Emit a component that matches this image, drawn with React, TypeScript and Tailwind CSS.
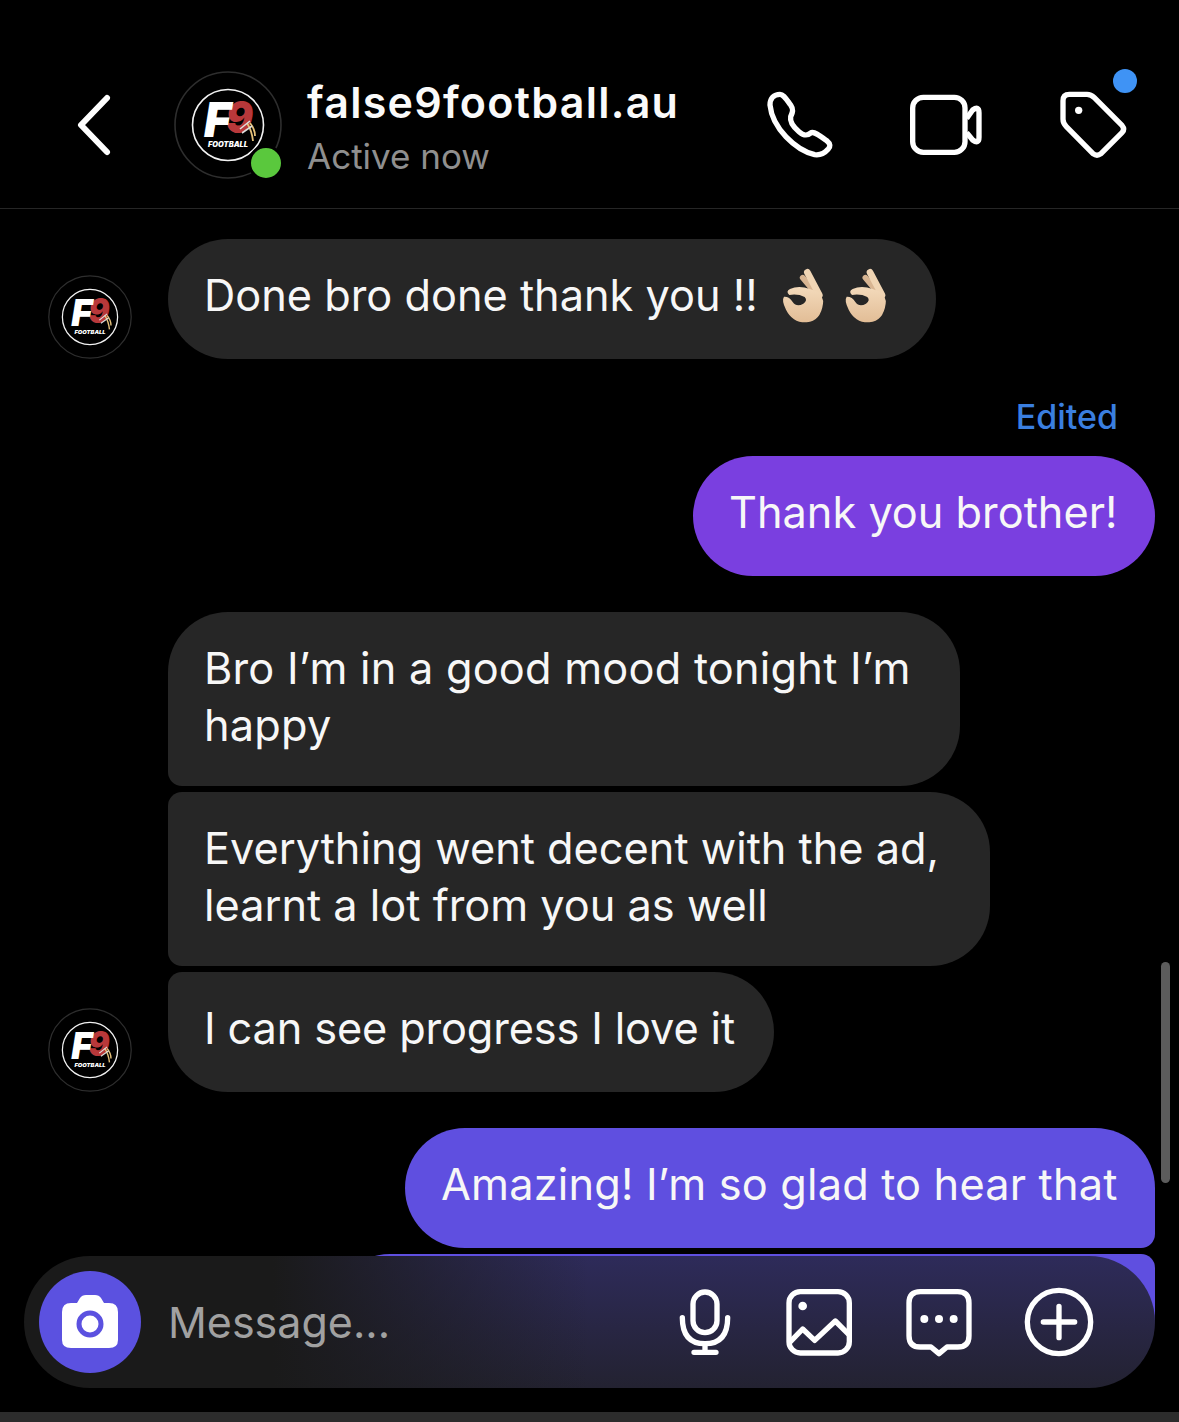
const sans = "font-['Inter','Liberation_Sans',sans-serif]";

const Logo = ({ className }: { className: string }) => (
  <svg viewBox="0 0 108 108" className={className}>
    <circle cx="54" cy="54" r="53" fill="#000" stroke="#2e2e2e" strokeWidth="1.6" />
    <circle cx="54" cy="54" r="35.5" fill="#000" stroke="#f2f2f2" strokeWidth="1.6" />
    <text x="52" y="62" fill="#b8383a" fontSize="44" fontWeight="900" fontStyle="italic" fontFamily="Inter, sans-serif" textLength="27" lengthAdjust="spacingAndGlyphs">9</text>
    <text x="30" y="66" fill="#fff" fontSize="48" fontWeight="900" fontStyle="italic" fontFamily="Inter, sans-serif" textLength="27" lengthAdjust="spacingAndGlyphs">F</text>
    <path d="M73 52 Q78 60 79 70 M76 52 Q81 58 81 65" stroke="#e6c27a" strokeWidth="1.8" fill="none" />
    <path d="M66 58 L76 50 M68 62 L78 55" stroke="#ddd" strokeWidth="1.6" fill="none" />
    <text x="34" y="76" fill="#fff" fontSize="7" fontWeight="900" fontStyle="italic" fontFamily="Inter, sans-serif" textLength="40" lengthAdjust="spacingAndGlyphs">FOOTBALL</text>
  </svg>
);

const Hand = ({ dx }: { dx: number }) => (
  <g transform={`translate(${dx} 0)`}>
    <path d="M128 82 L168 130" stroke="#d8b592" strokeWidth="17" strokeLinecap="round" fill="none" />
    <path d="M142 66 L178 134" stroke="#f0d5b4" strokeWidth="20" strokeLinecap="round" fill="none" />
    <path
      d="M72 139 Q64 150 78 178 Q98 218 140 216 Q182 212 189 160 Q192 140 172 124 L150 116 Q116 104 90 116 Q76 124 88 134 Q114 130 134 140 Q144 150 130 160 Q110 172 98 155 Q88 138 72 139Z"
      fill="url(#skin)"
    />
  </g>
);

const OkHands = () => (
  <svg viewBox="60 50 330 180" className="ml-[22px] h-[60px] w-[110px] shrink-0">
    <defs>
      <linearGradient id="skin" x1="0" y1="0" x2="0" y2="1">
        <stop offset="0" stopColor="#f3dabb" />
        <stop offset="1" stopColor="#e2bd96" />
      </linearGradient>
    </defs>
    <Hand dx={0} />
    <Hand dx={188} />
  </svg>
);

const Bubble = ({ className, children }: { className: string; children: React.ReactNode }) => (
  <div className={`flex min-h-[120px] items-start pb-[32px] pl-[36px] pr-[37px] pt-[28px] text-[43.3px] leading-[57px] text-[#f7f7f7] ${className}`}>
    {children}
  </div>
);

const Header = () => (
  <div className="flex h-[209px] shrink-0 items-center border-b border-[#262626] pl-[74px] pr-[50px] pt-[41px]">
    <svg viewBox="0 0 40 66" className="h-[66px] w-[40px] shrink-0">
      <path d="M33 6 L7 33 L33 60" stroke="#fff" strokeWidth="6" strokeLinecap="round" strokeLinejoin="round" fill="none" />
    </svg>
    <div className="relative ml-[60px] h-[108px] w-[108px] shrink-0">
      <Logo className="h-[108px] w-[108px]" />
      <span className="absolute left-[74px] top-[74px] h-[36px] w-[36px] rounded-full border-[3px] border-black bg-[#5ac83d]" />
    </div>
    <div className="ml-[25px] flex flex-col pt-[7px]">
      <span className="text-[43px] font-semibold leading-[50px] tracking-[1.25px] text-[#fafafa]">false9football.au</span>
      <span className="mt-[6px] text-[35px] leading-[46px] text-[#8f8f8f]">Active now</span>
    </div>
    <div className="ml-auto flex items-center gap-[75px]">
      <svg viewBox="67 117 216 216" className="h-[72px] w-[72px]">
        <path
          d="M88 165 C88 145 100 133 118 133 C128 133 135 145 150 165 C160 180 155 188 150 200 C147 215 155 228 175 245 C190 258 200 258 212 248 C222 245 235 255 258 272 C270 282 270 290 262 298 C250 312 238 316 222 314 C165 300 95 235 88 165Z"
          stroke="#fff"
          strokeWidth="16"
          strokeLinejoin="round"
          fill="none"
        />
      </svg>
      <svg viewBox="510 117 216 216" className="h-[72px] w-[72px]">
        <rect x="518" y="142" width="157" height="165" rx="32" stroke="#fff" strokeWidth="16" fill="none" />
        <path d="M680 205 L698 180 Q717 166 717 188 V262 Q717 284 698 270 L680 248" stroke="#fff" strokeWidth="16" strokeLinejoin="round" fill="none" />
      </svg>
      <div className="relative h-[72px] w-[72px]">
        <svg viewBox="950 117 216 216" className="h-[72px] w-[72px]">
          <path
            d="M968 152 Q968 133 987 133 H1040 Q1052 133 1062 143 L1145 226 Q1155 238 1145 248 L1082 311 Q1070 320 1058 311 L978 230 Q968 220 968 208Z"
            stroke="#fff"
            strokeWidth="16"
            strokeLinejoin="round"
            fill="none"
          />
          <circle cx="1015" cy="181" r="11" fill="#fff" />
        </svg>
        <span className="absolute left-[56px] top-[-20px] h-[24px] w-[24px] rounded-full bg-[#3f93f5]" />
      </div>
    </div>
  </div>
);

const Composer = () => (
  <div className="absolute bottom-[24px] left-[24px] flex h-[132px] w-[1131px] items-center rounded-[66px] bg-[linear-gradient(90deg,#1a1a1a_22%,rgba(26,26,26,0)_50%),linear-gradient(180deg,#2e2b5a_0%,#232231_100%)] pl-[15px] pr-[60px]">
    <div className="flex h-[102px] w-[102px] shrink-0 items-center justify-center rounded-full bg-[#5b51e0]">
      <svg viewBox="0 0 56 54" className="h-[54px] w-[56px]">
        <path d="M9 8 H15 L18 3 Q20 0 24 0 H33 Q37 0 39 3 L42 8 H47 Q56 8 56 17 V45 Q56 53 47 53 H9 Q0 53 0 45 V17 Q0 8 9 8Z" fill="#fff" />
        <circle cx="28" cy="29" r="11" stroke="#5b51e0" strokeWidth="5" fill="none" />
      </svg>
    </div>
    <span className="ml-[27px] text-[43px] leading-[50px] text-[#a1a1a1]">Message...</span>
    <div className="ml-auto flex items-center gap-[48px]">
      <svg viewBox="73 137 180 216" className="h-[72px] w-[60px]">
        <rect x="127" y="155" width="72" height="122" rx="36" stroke="#fff" strokeWidth="16" fill="none" />
        <path d="M95 232 Q95 310 163 310 Q231 310 231 232" stroke="#fff" strokeWidth="16" strokeLinecap="round" fill="none" />
        <path d="M163 310 V336 M130 336 H196" stroke="#fff" strokeWidth="16" strokeLinecap="round" fill="none" />
      </svg>
      <svg viewBox="393 137 216 216" className="h-[72px] w-[72px]">
        <rect x="411" y="154" width="181" height="184" rx="34" stroke="#fff" strokeWidth="16" fill="none" />
        <circle cx="452" cy="197" r="13" fill="#fff" />
        <path d="M413 306 L452 266 L488 300 L550 242 L590 282" stroke="#fff" strokeWidth="16" strokeLinejoin="round" fill="none" />
      </svg>
      <svg viewBox="748 137 216 216" className="h-[72px] w-[72px]">
        <path d="M800 154 H912 Q946 154 946 188 V286 Q946 320 912 320 H880 L856 340 L832 320 H800 Q766 320 766 286 V188 Q766 154 800 154Z" stroke="#fff" strokeWidth="16" strokeLinejoin="round" fill="none" />
        <circle cx="812" cy="236" r="12" fill="#fff" />
        <circle cx="856" cy="236" r="12" fill="#fff" />
        <circle cx="900" cy="236" r="12" fill="#fff" />
      </svg>
      <svg viewBox="1104 137 216 216" className="h-[72px] w-[72px]">
        <circle cx="1212" cy="245" r="95" stroke="#fff" strokeWidth="16" fill="none" />
        <path d="M1212 198 V292 M1165 245 H1259" stroke="#fff" strokeWidth="16" strokeLinecap="round" fill="none" />
      </svg>
    </div>
  </div>
);

export default function App() {
  return (
    <div className={`flex h-[1422px] w-[1179px] flex-col overflow-hidden bg-black ${sans}`}>
      <Header />
      <div className="relative min-h-0 flex-1 overflow-hidden">
        <div className="flex flex-col pl-[48px] pr-[24px] pt-[30px]">
          <div className="flex items-end gap-[36px]">
            <Logo className="h-[84px] w-[84px] shrink-0" />
            <Bubble className="w-[768px] rounded-[60px] bg-[#262626]">
              <span className="whitespace-nowrap">Done bro done thank you !!</span>
              <OkHands />
            </Bubble>
          </div>
          <div className="mt-[39px] pr-[37px] text-right text-[34px] font-medium leading-[38px] text-[#3a7fe0]">Edited</div>
          <div className="mt-[20px] flex justify-end">
            <Bubble className="w-[462px] whitespace-nowrap rounded-[60px] bg-[#7a3fe0]">Thank you brother!</Bubble>
          </div>
          <div className="ml-[120px] mt-[36px] flex flex-col items-start gap-[6px]">
            <Bubble className="w-[792px] rounded-[60px] rounded-bl-[14px] bg-[#262626] tracking-[0.23px]">Bro I’m in a good mood tonight I’m happy</Bubble>
            <Bubble className="w-[822px] rounded-l-[14px] rounded-r-[60px] bg-[#262626]">Everything went decent with the ad, learnt a lot from you as well</Bubble>
          </div>
          <div className="mt-[6px] flex items-end gap-[36px]">
            <Logo className="h-[84px] w-[84px] shrink-0" />
            <Bubble className="w-[606px] whitespace-nowrap rounded-[60px] rounded-tl-[14px] bg-[#262626] tracking-[-0.14px]">I can see progress I love it</Bubble>
          </div>
          <div className="mt-[36px] flex flex-col items-end gap-[6px]">
            <Bubble className="w-[750px] whitespace-nowrap rounded-[60px] rounded-br-[14px] bg-[#5f4fe0] tracking-[0.18px]">Amazing! I’m so glad to hear that</Bubble>
            <div className="h-[120px] w-[825px] rounded-[60px] rounded-tr-[14px] bg-[#5f4fe0]" />
          </div>
        </div>
        <div className="absolute right-[9px] top-[753px] h-[221px] w-[9px] rounded-full bg-[#5c5c5c]" />
        <Composer />
      </div>
      <div className="h-[10px] shrink-0 bg-[#2c2c2c]" />
    </div>
  );
}
